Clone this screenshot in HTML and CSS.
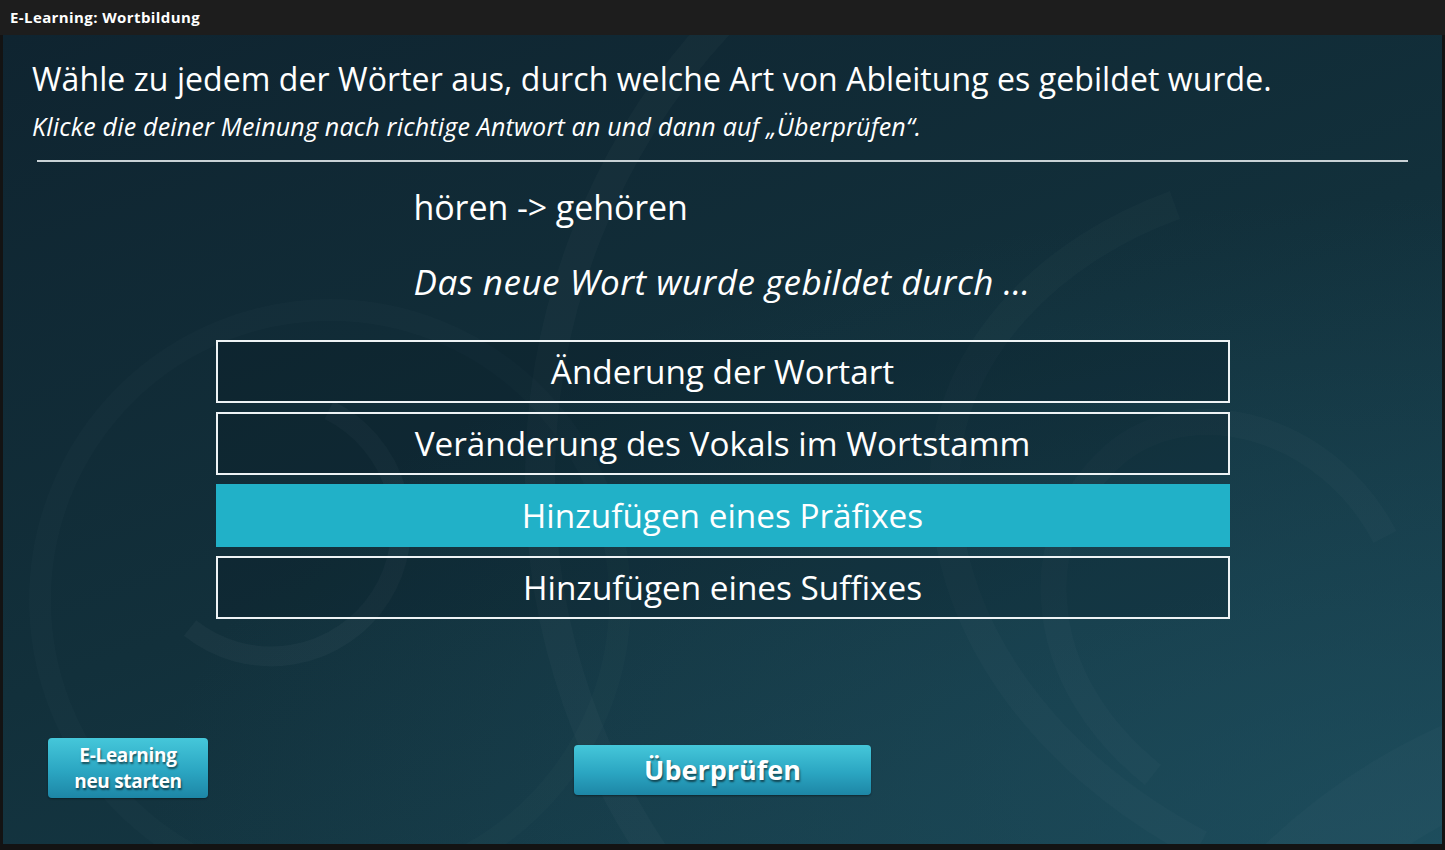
FILE: index.html
```html
<!DOCTYPE html>
<html lang="de">
<head>
<meta charset="utf-8">
<title>E-Learning: Wortbildung</title>
<link rel="stylesheet" href="styles.css">
</head>
<body>
<div class="app">
  <header class="titlebar">E-Learning: Wortbildung</header>
  <main class="stage">
    <svg class="decor" viewBox="0 0 1439 809" preserveAspectRatio="none" aria-hidden="true">
      <g fill="none" stroke="#ffffff">
        <circle cx="1207" cy="445" r="670" stroke-width="30" stroke-opacity="0.025"/>
        <circle cx="327" cy="565" r="290" stroke-width="22" stroke-opacity="0.015"/>
        <path d="M326 375 A130 130 0 1 1 187 593" stroke-width="20" stroke-opacity="0.03"/>
        <path d="M1172 170 C1047 215 947 315 942 435 C937 585 1037 725 1197 810" stroke-width="30" stroke-opacity="0.02"/>
        <path d="M1382 502 C1327 395 1197 355 1117 415 C1067 455 1047 515 1051 565 C1055 640 1100 700 1150 740" stroke-width="26" stroke-opacity="0.02"/>
        <circle cx="1697" cy="1265" r="585" stroke-width="90" stroke-opacity="0.02"/>
      </g>
    </svg>
    <div class="content">
      <h1 class="heading">Wähle zu jedem der Wörter aus, durch welche Art von Ableitung es gebildet wurde.</h1>
      <p class="instruction">Klicke die deiner Meinung nach richtige Antwort an und dann auf „Überprüfen“.</p>
      <hr class="divider">
      <section class="quiz">
        <p class="word">hören -&gt; gehören</p>
        <p class="question">Das neue Wort wurde gebildet durch …</p>
        <ul class="options">
          <li class="option">Änderung der Wortart</li>
          <li class="option">Veränderung des Vokals im Wortstamm</li>
          <li class="option is-selected">Hinzufügen eines Präfixes</li>
          <li class="option">Hinzufügen eines Suffixes</li>
        </ul>
      </section>
      <footer class="actions">
        <button class="btn btn-restart">E-Learning<br>neu starten</button>
        <button class="btn btn-check">Überprüfen</button>
        <span class="spacer"></span>
      </footer>
    </div>
  </main>
</div>
</body>
</html>
```
FILE: styles.css
```css
* { box-sizing: border-box; }
html, body { margin: 0; padding: 0; }
body {
  background: #121212;
  font-family: "Open Sans", "Noto Sans", sans-serif;
  color: #fff;
}
.app {
  width: 1445px;
  height: 850px;
  display: flex;
  flex-direction: column;
  background: #131313;
}
.titlebar {
  height: 35px;
  flex: none;
  background: #1d1d1d;
  padding-left: 10px;
  font-size: 15px;
  font-weight: 700;
  line-height: 35px;
  color: #fff;
  letter-spacing: 0.4px;
}
.stage {
  position: relative;
  flex: 1;
  margin: 0 3px 6px 3px;
  overflow: hidden;
  background:
    radial-gradient(ellipse 90% 80% at 100% 100%, rgba(34, 88, 106, 0.55) 0%, rgba(34, 88, 106, 0) 100%),
    linear-gradient(160deg, #0f2430 0%, #12303b 50%, #173f4c 100%);
}
.decor {
  position: absolute;
  inset: 0;
  width: 100%;
  height: 100%;
  z-index: 0;
}
.content {
  position: relative;
  z-index: 1;
  height: 100%;
  display: flex;
  flex-direction: column;
  padding-top: 24px;
}
.heading {
  margin: 0 0 0 29px;
  font-size: 32px;
  line-height: 40px;
  font-weight: 400;
  letter-spacing: 0.07px;
  white-space: nowrap;
}
.instruction {
  margin: 11px 0 0 29px;
  font-size: 25px;
  line-height: 32px;
  font-style: italic;
  letter-spacing: 0.2px;
  white-space: nowrap;
}
.divider {
  margin: 18px 34px 0 34px;
  height: 2px;
  border: 0;
  background: #c9d2d6;
}
.quiz {
  width: 1014px;
  margin: 0 auto;
}
.word {
  margin: 23px 0 0 198px;
  font-size: 34px;
  line-height: 44px;
  letter-spacing: -0.1px;
}
.question {
  margin: 31px 0 0 198px;
  font-size: 35px;
  line-height: 44px;
  font-style: italic;
  letter-spacing: 0.5px;
}
.options {
  list-style: none;
  margin: 36px 0 0 0;
  padding: 0;
  display: flex;
  flex-direction: column;
  gap: 9px;
}
.option {
  height: 63px;
  border: 2px solid #eef3f5;
  background: rgba(5, 20, 28, 0.22);
  text-align: center;
  font-size: 33.3px;
  line-height: 59px;
}
.option.is-selected {
  background: #21b1c8;
  border-color: #21b1c8;
}
.actions {
  margin-top: auto;
  padding-bottom: 46px;
  display: grid;
  grid-template-columns: 1fr auto 1fr;
  align-items: end;
}
.btn {
  font-family: "Open Sans", "Noto Sans", sans-serif;
  font-weight: 700;
  color: #fff;
  border: 0;
  border-radius: 4px;
  background: linear-gradient(180deg, #45c7da 0%, #2ba6c2 55%, #1d86a6 100%);
  text-shadow: 1px 2px 2px rgba(0, 0, 0, 0.55);
  box-shadow: 0 1px 2px rgba(0, 0, 0, 0.4);
  padding: 0;
  cursor: pointer;
}
.btn-restart {
  justify-self: start;
  margin-left: 45px;
  width: 160px;
  height: 60px;
  font-size: 19px;
  line-height: 26px;
  letter-spacing: -0.3px;
}
.btn-check {
  width: 297px;
  height: 50px;
  margin-bottom: 3px;
  font-size: 27px;
  line-height: 50px;
}
```
